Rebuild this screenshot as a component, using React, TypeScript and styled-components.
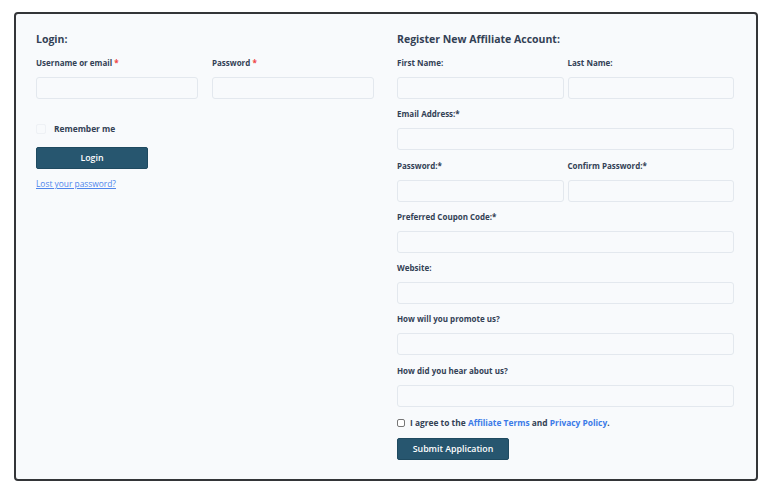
import React from "react";
import styled, { createGlobalStyle } from "styled-components";

const Global = createGlobalStyle`
  html, body { margin: 0; padding: 0; background: #ffffff; }
  body { font-family: "Open Sans", "Noto Sans", sans-serif; color: #334155; }
  * { box-sizing: border-box; }
`;

const Page = styled.div`
  padding: 12px 14px 14px 14px;
`;

const Card = styled.div`
  width: 744px;
  height: 469px;
  border: 2px solid #333538;
  border-radius: 4px;
  background: #f8fafc;
  padding: 18px 22px 0 20px;
  display: grid;
  grid-template-columns: 338px 337px;
  column-gap: 23px;
  align-items: start;
`;

const Column = styled.div`
  display: flex;
  flex-direction: column;
`;

const Heading = styled.h2`
  margin: 0 0 11px 0;
  font-size: 10.5px;
  line-height: 14px;
  font-weight: 700;
  color: #334155;
`;

const Row = styled.div<{ $gap: number }>`
  display: grid;
  grid-template-columns: 1fr 1fr;
  column-gap: ${(p) => p.$gap}px;
`;

const Field = styled.div`
  display: flex;
  flex-direction: column;
  margin-bottom: 9.3px;
`;

const Label = styled.label`
  font-size: 8px;
  line-height: 12px;
  font-weight: 700;
  color: #334155;
  margin-bottom: 8px;
`;

const Req = styled.span`
  color: #ef4444;
`;

const Input = styled.input`
  height: 22px;
  width: 100%;
  border: 1px solid #e3e8ee;
  border-radius: 3px;
  background: #f8fafc;
  font: inherit;
  outline: none;
`;

const CheckRow = styled.label<{ $gap: number }>`
  display: flex;
  align-items: center;
  gap: ${(p) => p.$gap}px;
  font-size: 8.4px;
  font-weight: 700;
  color: #334155;
`;

const SoftBox = styled.span`
  width: 10px;
  height: 10px;
  border: 1px solid #eef1f5;
  border-radius: 2px;
  background: #f8fafc;
`;

const NativeBox = styled.span`
  width: 8px;
  height: 8px;
  border: 1px solid #767676;
  border-radius: 2px;
  background: #ffffff;
`;

const Button = styled.button<{ $w: number }>`
  width: ${(p) => p.$w}px;
  height: 22px;
  background: #27566f;
  color: #ffffff;
  border: 1px solid #1f4a60;
  border-radius: 2px;
  font-family: "Open Sans", "Noto Sans", sans-serif;
  font-size: 8.8px;
  font-weight: 600;
  padding: 0;
`;

const Link = styled.a<{ $underline?: boolean }>`
  color: #3b7be8;
  text-decoration: ${(p) => (p.$underline ? "underline" : "none")};
  font-weight: ${(p) => (p.$underline ? 400 : 700)};
`;

const LostLink = styled(Link)`
  font-size: 8.4px;
  color: #4f86ec;
  margin-top: 9px;
`;

const LeftRemember = styled.div`
  margin-top: 15px;
  margin-bottom: 13px;
`;

const Agree = styled.div`
  margin-top: 1px;
  margin-bottom: 10px;
`;

function F({ label, req }: { label: string; req?: boolean }) {
  return (
    <Field>
      <Label>
        {label}
        {req && <Req> *</Req>}
      </Label>
      <Input />
    </Field>
  );
}

export default function App() {
  return (
    <>
      <Global />
      <Page>
        <Card>
          <Column>
            <Heading>Login:</Heading>
            <Row $gap={14}>
              <F label="Username or email" req />
              <F label="Password" req />
            </Row>
            <LeftRemember>
              <CheckRow $gap={8}>
                <SoftBox />
                Remember me
              </CheckRow>
            </LeftRemember>
            <Button $w={112}>Login</Button>
            <LostLink href="#" $underline>
              Lost your password?
            </LostLink>
          </Column>
          <Column>
            <Heading>Register New Affiliate Account:</Heading>
            <Row $gap={4}>
              <F label="First Name:" />
              <F label="Last Name:" />
            </Row>
            <F label="Email Address:*" />
            <Row $gap={4}>
              <F label="Password:*" />
              <F label="Confirm Password:*" />
            </Row>
            <F label="Preferred Coupon Code:*" />
            <F label="Website:" />
            <F label="How will you promote us?" />
            <F label="How did you hear about us?" />
            <Agree>
              <CheckRow $gap={5}>
                <NativeBox />
                <span>
                  I agree to the <Link href="#">Affiliate Terms</Link> and{" "}
                  <Link href="#">Privacy Policy</Link>.
                </span>
              </CheckRow>
            </Agree>
            <Button $w={112}>Submit Application</Button>
          </Column>
        </Card>
      </Page>
    </>
  );
}
